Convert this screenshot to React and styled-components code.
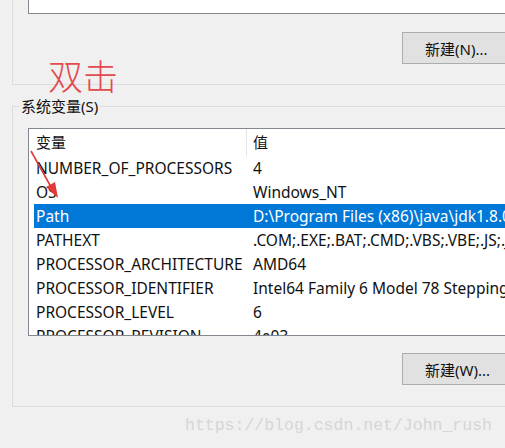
import React from "react";
import { styled, createGlobalStyle } from "styled-components";

const GlobalStyle = createGlobalStyle`
  html, body {
    margin: 0;
    padding: 0;
    background: #f0f0f0;
  }
`;

const rows = [
  { name: "NUMBER_OF_PROCESSORS", value: "4" },
  { name: "OS", value: "Windows_NT" },
  { name: "Path", value: "D:\\Program Files (x86)\\java\\jdk1.8.0_121\\bin", selected: true },
  { name: "PATHEXT", value: ".COM;.EXE;.BAT;.CMD;.VBS;.VBE;.JS;.JSE;.WSF" },
  { name: "PROCESSOR_ARCHITECTURE", value: "AMD64" },
  { name: "PROCESSOR_IDENTIFIER", value: "Intel64 Family 6 Model 78 Stepping 3" },
  { name: "PROCESSOR_LEVEL", value: "6" },
  { name: "PROCESSOR_REVISION", value: "4e03" },
];

const App = () => {
  return (
    <>
      <GlobalStyle />
      <Page>
        <Frame>
          <UserGroup>
            <UserListStub />
            <ButtonRow>
              <Button>新建(N)...</Button>
            </ButtonRow>
          </UserGroup>

          <SysGroup>
            <Legend>系统变量(S)</Legend>
            <ListBox>
              <Header>
                <HeadCell $first>变量</HeadCell>
                <HeadCell>值</HeadCell>
              </Header>
              {rows.map((r) => (
                <Row key={r.name} $selected={r.selected}>
                  <Cell $first>{r.name}</Cell>
                  <Cell>{r.value}</Cell>
                </Row>
              ))}
            </ListBox>
            <ButtonRow $gap={17}>
              <Button>新建(W)...</Button>
            </ButtonRow>
          </SysGroup>

          <Footer>https://blog.csdn.net/John_rush</Footer>
        </Frame>

        <Note>双击</Note>
        <Arrow viewBox="0 0 40 60" width="40" height="60">
          <line x1="2" y1="2" x2="22" y2="38" stroke="#e03a3a" strokeWidth="1.6" />
          <polygon points="29,49 17,38 26,33" fill="#e03a3a" />
        </Arrow>
      </Page>
    </>
  );
};

export default App;

const Page = styled.div`
  position: relative;
  width: 505px;
  height: 448px;
  overflow: hidden;
  background: #f0f0f0;
  font-family: "Noto Sans", "Noto Sans CJK SC", sans-serif;
  color: #111;
`;

const Frame = styled.div`
  width: 540px;
  padding-left: 12px;
  display: flex;
  flex-direction: column;
`;

const UserGroup = styled.div`
  height: 84px;
  border-left: 1px solid #dcdcdc;
  border-bottom: 1px solid #dcdcdc;
  display: flex;
  flex-direction: column;
`;

const UserListStub = styled.div`
  margin-left: 15px;
  height: 13px;
  background: #fff;
  border-left: 1px solid #828790;
  border-bottom: 1px solid #828790;
`;

const ButtonRow = styled.div`
  display: flex;
  margin-top: ${(p) => p.$gap ?? 18}px;
  padding-left: 389px;
`;

const Button = styled.button`
  width: 108px;
  height: 32px;
  margin: 0;
  padding: 0 0 0 22px;
  background: #e1e1e1;
  border: 1px solid #adadad;
  font-family: "Noto Sans", "Noto Sans CJK SC", sans-serif;
  font-size: 15px;
  color: #111;
  text-align: left;
`;

const SysGroup = styled.fieldset`
  margin: 11px 0 0 0;
  padding: 12px 0 21px 0;
  border: 1px solid #dcdcdc;
  border-right: none;
  min-width: 0;
`;

const Legend = styled.legend`
  margin-left: 6px;
  padding: 0 2px;
  font-size: 15px;
  line-height: 20px;
  color: #111;
`;

const ListBox = styled.div`
  margin-left: 15px;
  height: 206px;
  background: #fff;
  border: 1px solid #828790;
  border-right: none;
  overflow: hidden;
`;

const Header = styled.div`
  display: grid;
  grid-template-columns: 218px 1fr;
  height: 27px;
`;

const HeadCell = styled.div`
  font-size: 15px;
  line-height: 27px;
  padding-left: ${(p) => (p.$first ? 7 : 6)}px;
  border-right: ${(p) => (p.$first ? "1px solid #e5e5e5" : "none")};
`;

const Row = styled.div`
  display: grid;
  grid-template-columns: 213px 1fr;
  height: 24px;
  margin-left: 5px;
  background: ${(p) => (p.$selected ? "#0078d7" : "transparent")};
  color: ${(p) => (p.$selected ? "#fff" : "#111")};
`;

const Cell = styled.div`
  font-size: 15.5px;
  line-height: 24px;
  white-space: nowrap;
  overflow: hidden;
  padding-left: ${(p) => (p.$first ? 2 : 6)}px;
`;

const Footer = styled.div`
  padding-top: 9px;
  padding-left: 173px;
  font-family: "Liberation Mono", monospace;
  font-size: 16.5px;
  line-height: 20px;
  color: #d6d6d6;
  white-space: nowrap;
`;

const Note = styled.div`
  position: absolute;
  left: 48px;
  top: 58px;
  font-family: "Noto Sans CJK SC", sans-serif;
  font-weight: 300;
  font-size: 35px;
  line-height: 34px;
  color: #e24a4f;
`;

const Arrow = styled.svg`
  position: absolute;
  left: 29px;
  top: 149px;
`;
